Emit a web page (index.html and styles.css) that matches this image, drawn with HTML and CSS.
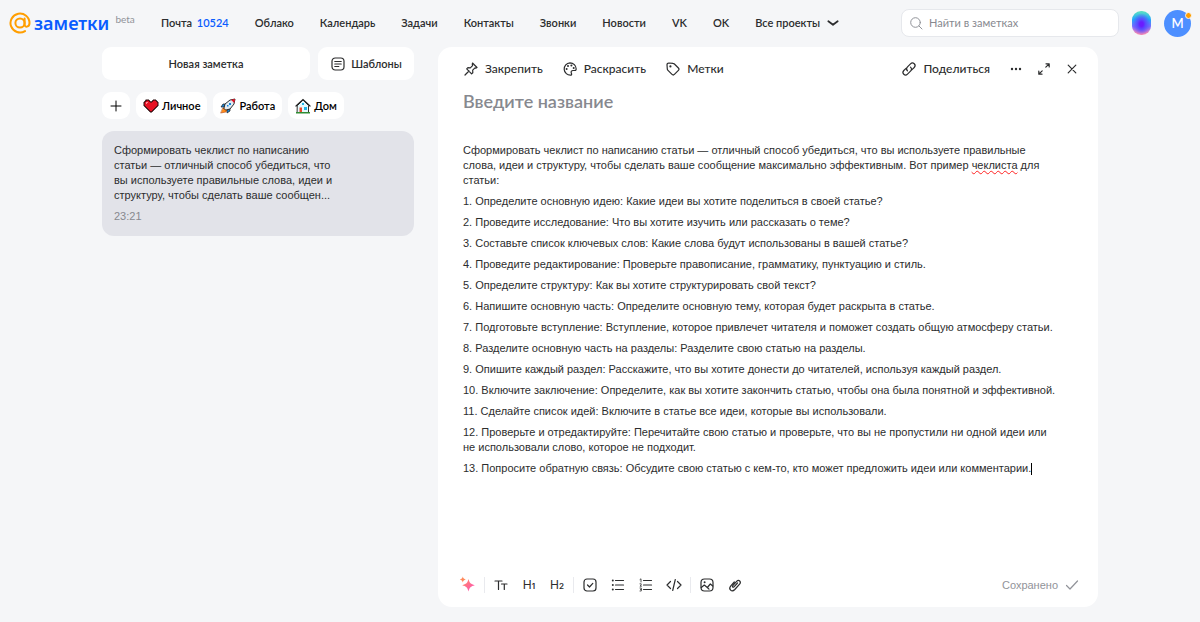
FILE: index.html
```html
<!DOCTYPE html>
<html lang="ru">
<head>
<meta charset="utf-8">
<meta name="viewport" content="width=device-width, initial-scale=1">
<title>Заметки</title>
<link rel="stylesheet" href="styles.css">
</head>
<body>
<header class="topbar">
  <a class="logo" href="#">
    <svg class="logo-mark" viewBox="0 0 22 22"><circle cx="11" cy="11" r="4.6"/><path d="M15.600 6.500v6c0 3.300 4.900 2.900 4.900-1.500A9.500 9.500 0 1 0 16 19.100"/></svg>
    <span class="logo-name">заметки</span>
    <span class="logo-beta">beta</span>
  </a>
  <nav class="nav">
    <a href="#">Почта <span class="nav-count">10524</span></a>
    <a href="#">Облако</a>
    <a href="#">Календарь</a>
    <a href="#">Задачи</a>
    <a href="#">Контакты</a>
    <a href="#">Звонки</a>
    <a href="#">Новости</a>
    <a href="#">VK</a>
    <a href="#">OK</a>
    <button class="nav-more" type="button">Все проекты
      <svg class="chevron" viewBox="0 0 12 12"><path d="M2 4.500l4 3L10 4.500"/></svg>
    </button>
  </nav>
  <label class="search">
    <svg class="search-icon" viewBox="0 0 14 14"><circle cx="6.500" cy="6.500" r="4.800"/><path d="M10 10l3 3"/></svg>
    <input class="search-input" type="search" placeholder="Найти в заметках" aria-label="Найти в заметках">
  </label>
  <button class="assistant" type="button" aria-label="Помощник"></button>
  <button class="avatar" type="button">М<span class="avatar-dot"></span></button>
</header>
<main class="layout">
  <aside class="sidebar">
    <div class="actions">
      <button class="action action-new" type="button">Новая заметка</button>
      <button class="action" type="button">
        <svg class="icon" viewBox="0 0 16 16"><rect x="2" y="2" width="12" height="12" rx="3.200"/><path d="M4.800 5.500h6.400M4.800 8h6.400M4.800 10.500h4"/></svg>
        Шаблоны
      </button>
    </div>
    <div class="tags">
      <button class="tag tag-add" type="button" aria-label="Добавить метку"><svg class="icon-plus" viewBox="0 0 12 12"><path d="M6 1v10M1 6h10"/></svg></button>
      <button class="tag" type="button">
        <svg class="emoji" viewBox="0 0 16 16"><path d="M3 2h3v1h1v1h2V3h1V2h3v1h1v1h1v4h-1v1h-1v1h-1v1h-1v1h-1v1H9v1H7v-1H6v-1H5v-1H4v-1H3V9H2V8H1V4h1V3h1z" fill="#e81224" stroke="#26080b"/><path d="M3 4h2v1H4v1H3z" fill="#ff8a93"/></svg>
        Личное
      </button>
      <button class="tag" type="button">
        <svg class="emoji" viewBox="0 0 16 16"><path d="M5 6H3L1 9h3zM10 11v2l-3 2v-3z" fill="#1686d9" stroke="#1b1b1b" stroke-width=".7"/><path d="M3 10h2l2 2-1 2-5 1z" fill="#ff8c1a" stroke="#a33a12" stroke-width=".5"/><path d="M4 10l1-4 5-4 5-1-1 5-4 5-4 1z" fill="#dfeaf2" stroke="#1b1b1b" stroke-width=".9"/><path d="M11 1.800l4-.8-.8 4z" fill="#e81224"/><path d="M9 5h2v2H9zM7 7h1.500v1.500H7z" fill="#1686d9"/></svg>
        Работа
      </button>
      <button class="tag" type="button">
        <svg class="emoji" viewBox="0 0 16 16"><path d="M2.500 7.500L8 2l5.500 5.500v7h-11z" fill="#e4f8fd" stroke="#333"/><path d="M1 8l7-6.500L15 8" fill="none" stroke="#222" stroke-width="1.200"/><path d="M4.500 9.500h2.500V14H4.500z" fill="#e8482c"/><path d="M9 9h3v3H9zM7 5h2v2H7z" fill="#20b5e8"/><path d="M1 14h14v1.500H1z" fill="#2f8d33"/></svg>
        Дом
      </button>
    </div>
    <article class="note">
      <p class="note-text">Сформировать чеклист по написанию статьи — отличный способ убедиться, что вы используете правильные слова, идеи и структуру, чтобы сделать ваше сообщен...</p>
      <time class="note-time">23:21</time>
    </article>
  </aside>
  <section class="editor">
    <div class="editor-bar">
      <button class="tool" type="button"><svg class="icon" viewBox="0 0 16 16"><path d="M9.500 2l4.500 4.500-1.200.6-.8-.2-2.300 2.300.1 2.500-1.200 1.100-4.900-4.900 1.200-1.200 2.400.2 2.300-2.300-.3-1.300zM6 10l-4 4"/></svg>Закрепить</button>
      <button class="tool" type="button"><svg class="icon" viewBox="0 0 16 16"><path d="M8 1.800a6.200 6.200 0 1 0 .8 12.400c1.200-.2.900-1.300.5-2.200-.6-1.400.2-2.500 1.700-2.500 1.800 0 3.200.3 3.200-1.600A6.200 6.200 0 0 0 8 1.800z"/><g class="dots"><circle cx="4.600" cy="8" r="1"/><circle cx="6" cy="5" r="1"/><circle cx="9.400" cy="4.500" r="1"/><circle cx="11.700" cy="7" r="1"/></g></svg>Раскрасить</button>
      <button class="tool" type="button"><svg class="icon" viewBox="0 0 16 16"><path d="M2 3.800C2 2.700 2.700 2 3.800 2L8 2.300c.6 0 1 .3 1.400.7l4 4c.8.8.8 1.600 0 2.400l-4 4c-.8.8-1.600.8-2.400 0l-4-4c-.4-.4-.7-.8-.7-1.400z"/><circle class="dots" cx="5.400" cy="5.400" r="1.100"/></svg>Метки</button>
      <div class="editor-side">
        <button class="tool tool-share" type="button"><svg class="icon" viewBox="0 0 16 16"><path d="M6.500 9.800C5 8.300 5.400 6.900 6.500 5.800l3-3c2.500-2.500 6.200 1 3.700 3.700L11 8.700M9.500 6.200c1.500 1.500 1.100 2.900 0 4l-3 3c-2.500 2.500-6.200-1-3.700-3.700L5 7.300"/></svg>Поделиться</button>
        <button class="tool" type="button" aria-label="Ещё"><svg class="icon" viewBox="0 0 16 16"><g class="dots"><circle cx="4" cy="8" r="1.200"/><circle cx="8" cy="8" r="1.200"/><circle cx="12" cy="8" r="1.200"/></g></svg></button>
        <button class="tool" type="button" aria-label="Развернуть"><svg class="icon" viewBox="0 0 16 16"><path d="M9.800 6.200l3.400-3.400M10 2.800h3.200V6M6.200 9.800l-3.400 3.400M2.800 10v3.200H6"/></svg></button>
        <button class="tool" type="button" aria-label="Закрыть"><svg class="icon" viewBox="0 0 16 16"><path d="M4.200 4.200l7.600 7.600M11.800 4.200l-7.600 7.600"/></svg></button>
      </div>
    </div>
    <input class="title" type="text" placeholder="Введите название" aria-label="Название">
    <div class="content">
      <p>Сформировать чеклист по написанию статьи — отличный способ убедиться, что вы используете правильные слова, идеи и структуру, чтобы сделать ваше сообщение максимально эффективным. Вот пример <span class="misspelled">чеклиста</span> для статьи:</p>
      <p>1. Определите основную идею: Какие идеи вы хотите поделиться в своей статье?</p>
      <p>2. Проведите исследование: Что вы хотите изучить или рассказать о теме?</p>
      <p>3. Составьте список ключевых слов: Какие слова будут использованы в вашей статье?</p>
      <p>4. Проведите редактирование: Проверьте правописание, грамматику, пунктуацию и стиль.</p>
      <p>5. Определите структуру: Как вы хотите структурировать свой текст?</p>
      <p>6. Напишите основную часть: Определите основную тему, которая будет раскрыта в статье.</p>
      <p>7. Подготовьте вступление: Вступление, которое привлечет читателя и поможет создать общую атмосферу статьи.</p>
      <p>8. Разделите основную часть на разделы: Разделите свою статью на разделы.</p>
      <p>9. Опишите каждый раздел: Расскажите, что вы хотите донести до читателей, используя каждый раздел.</p>
      <p>10. Включите заключение: Определите, как вы хотите закончить статью, чтобы она была понятной и эффективной.</p>
      <p>11. Сделайте список идей: Включите в статье все идеи, которые вы использовали.</p>
      <p>12. Проверьте и отредактируйте: Перечитайте свою статью и проверьте, что вы не пропустили ни одной идеи или не использовали слово, которое не подходит.</p>
      <p>13. Попросите обратную связь: Обсудите свою статью с кем-то, кто может предложить идеи или комментарии.<span class="caret"></span></p>
    </div>
    <div class="format-bar">
      <button class="fmt" type="button" aria-label="Нейросеть"><svg class="icon sparkle" viewBox="0 0 16 16"><defs><linearGradient id="spark" x1="0" y1="0" x2="1" y2="1"><stop offset="0" stop-color="#ff8a5c"/><stop offset="1" stop-color="#ff4fc3"/></linearGradient></defs><path fill="url(#spark)" d="M8.500 2c1 4 2.300 5.200 6.300 6.200-4 1-5.300 2.300-6.300 6.300-1-4-2.300-5.300-6.300-6.300 4-1 5.300-2.200 6.300-6.200z"/><path fill="#ff8a5c" d="M2.800-.5c.5 1.900 1.100 2.500 3 3-1.900.5-2.500 1.100-3 3-.5-1.900-1.100-2.500-3-3 1.900-.5 2.500-1.100 3-3z"/></svg></button>
      <span class="divider"></span>
      <button class="fmt" type="button" aria-label="Текст"><svg class="icon" viewBox="0 0 16 16"><path d="M2 4h7M5.500 4v8.500M8.500 7h5.500M11.300 7v5.500"/></svg></button>
      <button class="fmt fmt-text" type="button">H<sub>1</sub></button>
      <button class="fmt fmt-text" type="button">H<sub>2</sub></button>
      <span class="divider"></span>
      <button class="fmt" type="button" aria-label="Чек-лист"><svg class="icon" viewBox="0 0 16 16"><rect x="2" y="2" width="12" height="12" rx="3"/><path d="M5.500 8l2 2 3.300-3.600"/></svg></button>
      <button class="fmt" type="button" aria-label="Маркированный список"><svg class="icon" viewBox="0 0 16 16"><path d="M5.500 3.500h8M5.500 8h8M5.500 12.500h8"/><g class="dots"><circle cx="2.800" cy="3.500" r="1"/><circle cx="2.800" cy="8" r="1"/><circle cx="2.800" cy="12.500" r="1"/></g></svg></button>
      <button class="fmt" type="button" aria-label="Нумерованный список"><svg class="icon" viewBox="0 0 16 16"><path d="M5.500 3.500h8M5.500 8h8M5.500 12.500h8"/><path class="thin" d="M2 2.500l1-.7v3.200M2 6.800h1.200v1L2 9.200h1.500M2 11h1.300v3H2M2.500 12.500h.8"/></svg></button>
      <button class="fmt" type="button" aria-label="Код"><svg class="icon" viewBox="0 0 16 16"><path d="M4.500 4.500L1 8l3.500 3.500M11.500 4.500L15 8l-3.500 3.500M9.300 2.500l-2.600 11"/></svg></button>
      <span class="divider"></span>
      <button class="fmt" type="button" aria-label="Изображение"><svg class="icon" viewBox="0 0 16 16"><rect x="2" y="2" width="12" height="12" rx="3.500"/><path d="M2.300 10.500l3-2.500 3 2.500 3-3.500 2.500 2M8.300 10.500l1.700 1.700"/><circle class="dots" cx="5.600" cy="5.300" r="1"/></svg></button>
      <button class="fmt" type="button" aria-label="Файл"><svg class="icon" viewBox="0 0 16 16"><path d="M10.500 6L7 9.800c-1 1-2.200-.1-1.200-1.200l3.800-4.200c2.300-2.400 5 .3 3 2.700l-4.800 5.400c-3 3.200-6.800-.3-4-3.600L7.300 5"/></svg></button>
      <span class="saved">Сохранено<svg class="icon" viewBox="0 0 16 16"><path d="M2.500 8.500L6 12l7.500-8"/></svg></span>
    </div>
  </section>
</main>
</body>
</html>
```
FILE: styles.css
```css
* { box-sizing: border-box; }
body {
  margin: 0;
  min-height: 100vh;
  display: flex;
  flex-direction: column;
  background: #f5f6f8;
  color: #2c2d2e;
  font: 600 11px/16px Lato, "Liberation Sans", sans-serif;
}
button, input { font: inherit; color: inherit; }
button { border: 0; padding: 0; background: none; cursor: pointer; }
a { color: inherit; text-decoration: none; }
p { margin: 0; }
svg { display: block; flex: none; fill: none; stroke: currentColor; stroke-linecap: round; stroke-linejoin: round; }

.topbar { display: flex; align-items: center; height: 46px; padding: 0 9px; }
.logo { display: flex; align-items: center; width: 152px; color: #0a5cff; }
.logo-mark { width: 22px; height: 22px; color: #ff9e00; stroke-width: 2; }
.logo-name { margin-left: 3px; font: 600 18px/24px "Noto Sans", sans-serif; }
.logo-beta { align-self: flex-start; margin-left: 6px; color: #919399; font-size: 10px; font-weight: 400; }
.nav { display: flex; gap: 26px; white-space: nowrap; }
.nav-count { margin-left: 2px; color: #0a5cff; }
.nav-more { display: flex; align-items: center; gap: 6px; }
.chevron { width: 14px; height: 14px; stroke-width: 1.5; }
.search {
  display: flex; align-items: center; gap: 6px;
  width: 218px; height: 28px; margin-left: auto; padding: 0 7px;
  background: #fff; border: 1px solid #e6e8ec; border-radius: 8px; color: #919399;
}
.search-icon { width: 14px; height: 14px; }
.search-input { flex: 1; min-width: 0; padding: 0; border: 0; outline: 0; background: none; font-weight: 400; }
.search-input::placeholder, .title::placeholder { color: #87898f; opacity: 1; }
.assistant {
  width: 19px; height: 24px; margin-left: 13px; border-radius: 9px;
  background:
    radial-gradient(ellipse 9px 11px at 50% 55%, #6a1cff 20%, #5a4cff 45%, transparent 100%),
    linear-gradient(#5fe3c0, #1fa8fb 35%, #7a6bff 65%, #ff8fb0 95%);
}
.avatar { position: relative; width: 27px; height: 27px; margin-left: 13px; border-radius: 50%; background: #4d8fff; color: #fff; font-size: 13px; }
.avatar-dot { position: absolute; top: 2px; right: -1px; width: 7px; height: 7px; border: 1px solid #f5f6f8; border-radius: 50%; background: #ff9e00; }

.layout { flex: 1; display: grid; grid-template-columns: 312px 1fr; gap: 24px; padding: 1px 102px 15px; }
.actions { display: flex; gap: 8px; }
.action { display: flex; align-items: center; justify-content: center; gap: 5px; width: 96px; height: 33px; border-radius: 9px; background: #fff; }
.action-new { flex: 1; }
.icon { width: 16px; height: 16px; stroke-width: 1.2; }
.dots { fill: currentColor; stroke: none; }
.thin { stroke-width: .8; }
.tags { display: flex; gap: 6px; margin: 12px 0; }
.tag { display: flex; align-items: center; gap: 3px; height: 27px; padding: 0 7px; border-radius: 9px; background: #fff; color: #000; }
.icon-plus { width: 12px; height: 12px; }
.tag-add { padding: 0 8px; }
.emoji { width: 16px; height: 16px; stroke: none; stroke-linejoin: miter; }
.note { padding: 12px 72px 12px 12px; border-radius: 12px; background: #e2e3e9; font: 400 11px/15px "Liberation Sans", Arial, sans-serif; }
.note-time { display: block; margin-top: 6px; color: #87898f; }

.editor { display: flex; flex-direction: column; padding: 14px 18px 14px 25px; border-radius: 14px; background: #fff; }
.editor-bar { display: flex; align-items: center; gap: 19px; font-size: 12px; font-weight: 500; }
.editor-side { display: flex; align-items: center; gap: 12px; margin-left: auto; }
.tool { display: flex; align-items: center; gap: 6px; }
.tool-share { margin-right: 6px; }
.title { width: 100%; margin: 12px 0 30px; padding: 0; border: 0; outline: 0; font: 600 18px/24px Lato, sans-serif; }
.content { flex: 1; padding-right: 22px; font: 400 11px/15px "Liberation Sans", Arial, sans-serif; }
.content p { margin-bottom: 6px; }
.misspelled { text-decoration: underline wavy #f22 1px; }
.caret { display: inline-block; height: 12px; border-left: 1px solid #000; vertical-align: middle; }
.format-bar { display: flex; align-items: center; gap: 12px; margin-left: -3px; }
.fmt { width: 16px; height: 16px; }
.fmt-text { font: 400 12px/16px Inter, sans-serif; white-space: nowrap; }
.fmt-text sub { font-size: 8px; line-height: 8px; font-weight: 600; vertical-align: baseline; }
.sparkle { stroke: none; overflow: visible; }
.divider { width: 1px; height: 16px; margin: 0 -4px; background: #e9eaee; }
.saved { display: flex; align-items: center; gap: 6px; margin-left: auto; color: #919399; font: 400 11px/16px "Liberation Sans", Arial, sans-serif; }
```
